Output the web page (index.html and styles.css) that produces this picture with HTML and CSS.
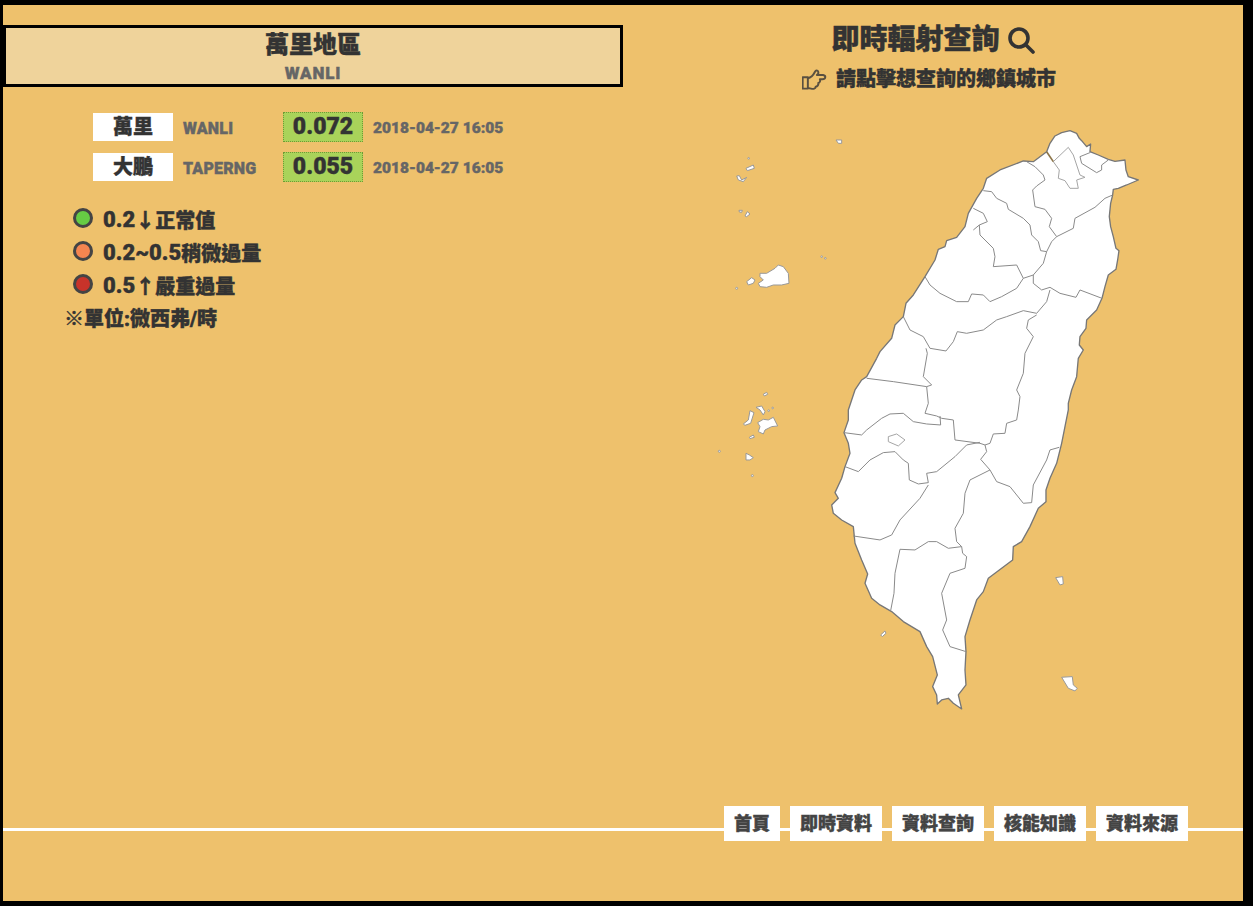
FILE: index.html
```html
<!DOCTYPE html>
<html lang="zh-Hant">
<head>
  <meta charset="UTF-8" />
  <title>即時輻射查詢</title>
  <link rel="stylesheet" href="styles.css">
</head>
<body>
  <div class="frame">
    <div class="main">
      <div class="left">
        <div class="area-box">
          <h2>萬里地區</h2>
          <p>WANLI</p>
        </div>

        <div class="stations">
          <div class="station">
            <span class="st-name">萬里</span>
            <span class="st-en">WANLI</span>
            <span class="st-value">0.072</span>
            <span class="st-time">2018-04-27 16:05</span>
          </div>
          <div class="station">
            <span class="st-name">大鵬</span>
            <span class="st-en">TAPERNG</span>
            <span class="st-value">0.055</span>
            <span class="st-time">2018-04-27 16:05</span>
          </div>
        </div>

        <ul class="legend">
          <li><i class="dot green"></i><span class="num">0.2</span><span class="arrow">↓</span>正常值</li>
          <li><i class="dot orange"></i><span class="num">0.2~0.5</span>稍微過量</li>
          <li><i class="dot red"></i><span class="num">0.5</span><span class="arrow">↑</span>嚴重過量</li>
        </ul>
        <p class="unit">※單位:微西弗/時</p>
      </div>

      <div class="right">
        <h1 class="title">即時輻射查詢
          <svg class="search" viewBox="0 0 28 28" width="28" height="28"><circle cx="12" cy="12" r="9"/><path d="M19 19 L26 26"/></svg>
        </h1>
        <p class="hint">
          <svg class="hand" viewBox="70 172 80 64" width="26" height="21"><path d="M72 197 H88 V232 H72 Z M88 200 C100 198 105 190 110 180 C113 174 122 176 120 186 L116 190 L135 190 C145 192 143 203 133 203 L125 203 C128 210 122 215 120 215 C122 222 115 226 112 226 C112 232 105 234 98 232 L88 230"/></svg>
          請點擊想查詢的鄉鎮城市
        </p>

        <svg class="map" viewBox="713 120 440 600" width="440" height="600">
          <defs>
            <filter id="rough" x="-5%" y="-5%" width="110%" height="110%">
              <feTurbulence type="fractalNoise" baseFrequency="0.16" numOctaves="2" seed="4"/>
              <feDisplacementMap in="SourceGraphic" scale="2.5"/>
            </filter>
          </defs>

          <!-- coordinates are from 3x crops of the map, hence the scale -->
          <g transform="translate(820 120) scale(.3333)" filter="url(#rough)">
            <path class="land" d="M680 95 L690 70 705 48 725 38 750 32 770 40 778 55 785 62 800 80 812 72 810 95 835 105 865 118 885 124 915 120 918 150 925 170 955 180 920 195 895 205 880 208 878 225 872 250 868 290 872 320 880 350 888 385 897 392 893 420 888 448 865 465 855 500 846 535 830 570 800 600 798 625 780 650 778 675 790 690 775 715 770 770 755 810 745 850 745 870 735 920 725 970 710 1030 690 1075 678 1110 678 1145 655 1165 630 1220 605 1265 580 1280 578 1320 545 1345 505 1375 490 1415 470 1440 450 1500 435 1550 438 1595 435 1650 438 1695 415 1725 425 1767 400 1750 385 1735 365 1740 352 1752 350 1725 338 1700 352 1665 338 1610 320 1580 300 1535 250 1505 215 1475 180 1455 155 1435 135 1390 143 1362 125 1320 105 1270 100 1220 65 1200 40 1180 35 1155 55 1135 45 1118 65 1075 75 1040 90 1000 85 970 72 938 85 900 85 870 95 840 105 810 125 780 140 770 170 715 180 695 215 655 225 615 250 590 258 550 280 525 315 470 345 420 355 388 375 380 380 362 410 352 435 320 445 280 470 235 490 205 500 175 540 150 610 123 640 125 Z"/>
            <path class="line" d="M620 125 L645 140 670 165 675 180 650 198 638 210 645 260 675 268 695 295 688 320 710 350"/>
            <path class="line pale" d="M700 125 L745 82 760 105 780 165 795 172 770 180 775 205 750 205 735 182 715 175 718 150 Z"/>
            <path class="line" d="M812 97 L780 110 785 130 830 158 845 150 845 135 865 120"/>
            <path class="line keelung" d="M680 95 L700 125"/>
            <path class="line" d="M710 350 L760 325 765 295 825 262 855 235 878 225"/>
            <path class="line" d="M490 212 L515 215 530 235 560 250 565 268 610 295 630 315 635 345 655 365 662 392 680 395 695 365 710 350"/>
            <path class="line" d="M460 265 L490 280 502 305 478 315 460 330"/>
            <path class="line" d="M478 315 L480 345 520 385 525 410 520 440 590 435 610 475"/>
            <path class="line" d="M680 395 L670 430 640 465 610 475 590 505 545 530 510 545 490 525 455 522 445 545 410 545 360 520 330 495 315 470"/>
            <path class="line" d="M640 465 L640 490 665 510 690 502 720 520 768 532 780 510 846 535"/>
            <path class="line" d="M690 510 L680 545 650 580 610 572 560 590 530 600 490 630 440 640 412 635 400 665 378 693 330 685 310 650 270 630 250 590"/>
            <path class="line" d="M650 585 L625 600 620 625 640 650 615 700 610 760 590 810 600 830 595 870 590 900 560 910 555 940 520 942 510 970 495 975"/>
            <path class="line" d="M318 685 L322 700 310 770 335 795 320 800 220 785 140 775"/>
            <path class="line" d="M320 800 L325 850 315 880 350 888 365 895 400 900 405 960 480 970 495 975"/>
            <path class="line" d="M72 938 L125 945 140 930 185 895 210 882 250 880 280 905 320 912 362 915 360 888"/>
            <path class="line" d="M75 1040 L115 1055 150 1020 190 998 225 995 250 1020 265 1030 268 1080 295 1092 325 1088 320 1060 350 1055 405 1010 440 975 480 967"/>
            <path class="line pale" d="M205 950 L230 942 255 960 235 978 205 965 Z"/>
            <path class="line" d="M325 1095 L300 1135 240 1200 215 1245 180 1260 100 1248"/>
            <path class="line" d="M495 975 L500 995 482 1018 510 1050 450 1080 435 1120 430 1180 405 1225 410 1265 425 1280 385 1285 350 1265 325 1265 285 1290 240 1288 225 1360 222 1420 212 1472"/>
            <path class="line" d="M425 1280 L428 1300 440 1310 435 1345 390 1360 365 1420 380 1500 368 1530 390 1580 438 1595"/>
            <path class="line" d="M510 1050 L530 1085 570 1100 610 1150 635 1148 640 1095 680 1020 690 990 718 982"/>
          </g>
          <g transform="translate(820 120) scale(.3333)">
            <path class="isle" d="M707 1373 L728 1370 730 1392 720 1395 Z"/>
            <path class="isle" d="M725 1672 L757 1670 760 1695 772 1705 765 1713 745 1705 Z"/>
            <path class="isle" d="M182 1545 L195 1533 198 1540 187 1550 Z"/>
            <path class="isle" d="M48 60 L65 60 65 70 55 70 Z"/>
          </g>
          <g transform="translate(710 130) scale(.3333)">
            <path class="isle" d="M150 430 L170 430 195 415 205 405 220 410 235 430 237 460 215 465 190 465 170 472 150 470 145 460 160 450 150 440 Z"/>
            <path class="isle" d="M110 455 L125 443 135 450 130 460 115 465 Z"/>
            <path class="isle" d="M80 138 L85 150 100 155 110 142 95 150 88 137 Z"/>
            <path class="isle" d="M108 115 L130 105 133 115 112 122 Z"/>
            <path class="isle" d="M87 241 L97 241 95 247 88 246 Z"/>
            <path class="isle" d="M105 258 L112 245 120 252 110 260 Z"/>
            <path class="isle" d="M143 878 L160 868 175 870 190 862 203 888 185 890 165 900 160 912 145 905 150 890 Z"/>
            <path class="isle" d="M100 882 L115 870 120 842 132 848 122 880 105 886 Z"/>
            <path class="isle" d="M138 832 L155 828 165 845 160 855 150 840 Z"/>
            <path class="isle" d="M118 922 L130 915 133 922 120 926 Z"/>
            <path class="isle" d="M108 970 L118 975 130 983 120 990 108 990 Z"/>
            <path class="isle" d="M160 793 L170 787 173 793 163 798 Z"/>
            <circle class="isle" cx="80" cy="475" r="3"/>
            <circle class="isle" cx="335" cy="380" r="2.5"/>
            <circle class="isle" cx="346" cy="385" r="2.5"/>
            <circle class="isle" cx="188" cy="834" r="2.5"/>
            <circle class="isle" cx="176" cy="842" r="2.5"/>
            <circle class="isle" cx="28" cy="964" r="3"/>
            <circle class="isle" cx="127" cy="1037" r="3"/>
            <circle class="isle" cx="116" cy="85" r="2.5"/>
          </g>
        </svg>
      </div>
    </div>

    <nav class="footer">
      <a href="#">首頁</a>
      <a href="#">即時資料</a>
      <a href="#">資料查詢</a>
      <a href="#">核能知識</a>
      <a href="#">資料來源</a>
    </nav>
  </div>
</body>
</html>
```

FILE: styles.css
```css
* {
  box-sizing: border-box;
}

html, body {
  margin: 0;
  padding: 0;
}

body {
  background: #000;
  padding: 5px 10px 5px 3px;
  font-family: Roboto, "Noto Sans CJK TC", sans-serif;
  font-weight: 900;
  color: #333;
  -webkit-text-stroke: 0.4px;
}

.frame {
  width: 1240px;
  height: 896px;
  background: #eec16c;
}

.main {
  display: flex;
  height: 801px;
}

.left {
  width: 620px;
  padding-top: 20px;
}

.area-box {
  height: 62px;
  border: 3px solid #000;
  background: #efd39b;
  text-align: center;
}

.area-box h2 {
  margin: 0;
  font-size: 24px;
  line-height: 34px;
  font-weight: 900;
}

.area-box p {
  margin: 0;
  font-size: 17px;
  line-height: 22px;
  color: #666;
  letter-spacing: 0.8px;
}

.stations {
  margin-top: 25px;
  padding-left: 90px;
}

.station {
  display: flex;
  align-items: center;
  height: 30px;
  margin-bottom: 10px;
}

.st-name {
  width: 80px;
  height: 28px;
  line-height: 28px;
  background: #fff;
  text-align: center;
  font-size: 20px;
}

.st-en {
  width: 110px;
  padding: 2px 0 0 10px;
  font-size: 16px;
  color: #666;
  letter-spacing: 0.2px;
}

.st-value {
  width: 80px;
  height: 30px;
  line-height: 28px;
  background: #a9d35a;
  border: 1px dotted #6f9a35;
  text-align: center;
  font-size: 23px;
}

.st-time {
  margin-left: 10px;
  padding-top: 2px;
  font-size: 15.5px;
  color: #666;
}

.legend {
  list-style: none;
  margin: 21px 0 0;
  padding: 0 0 0 70px;
}

.legend li {
  display: flex;
  align-items: center;
  height: 33px;
  font-size: 20px;
}

.dot {
  width: 20px;
  height: 20px;
  margin: -4px 10px 0 0;
  border: 3px solid #444;
  border-radius: 50%;
}

.green { background: #66cc44; }
.orange { background: #f58550; }
.red { background: #c8332a; }

.num {
  font-size: 22px;
}

.unit {
  margin: 1px 0 0;
  padding-left: 61px;
  font-size: 20px;
  line-height: 33px;
}

.right {
  flex: 1;
  padding-top: 15px;
  text-align: center;
}

.title {
  display: flex;
  align-items: center;
  justify-content: center;
  gap: 7px;
  margin: 0;
  font-size: 28px;
  line-height: 40px;
  font-weight: 900;
}

.search {
  fill: none;
  stroke: #333;
  stroke-width: 3.6;
  stroke-linecap: round;
}

.hint {
  display: flex;
  align-items: center;
  justify-content: center;
  gap: 8px;
  margin: 4px 0 0;
  padding-right: 8px;
  font-size: 20px;
  line-height: 30px;
}

.hand {
  fill: none;
  stroke: #5a5040;
  stroke-width: 6;
  stroke-linejoin: round;
}

.map {
  display: block;
  margin: 26px auto 0;
}

.land {
  fill: #fff;
  stroke: #777;
  stroke-width: 4;
  stroke-linejoin: round;
}

.line {
  fill: none;
  stroke: #8a8a8a;
  stroke-width: 3;
  stroke-linejoin: round;
}

.line.pale {
  stroke: #a5a5a5;
}

.line.keelung {
  stroke: #8c7448;
  stroke-width: 5;
}

.isle {
  fill: #fff;
  stroke: #999;
  stroke-width: 3;
  stroke-linejoin: round;
}

.footer {
  display: flex;
  justify-content: flex-end;
  gap: 10px;
  height: 35px;
  padding-right: 55px;
  background: linear-gradient(#fff, #fff) 0 22px / 100% 3px no-repeat;
}

.footer a {
  height: 35px;
  padding: 0 10px;
  background: #fff;
  color: #444;
  font-size: 18px;
  line-height: 35px;
  text-decoration: none;
}
```
